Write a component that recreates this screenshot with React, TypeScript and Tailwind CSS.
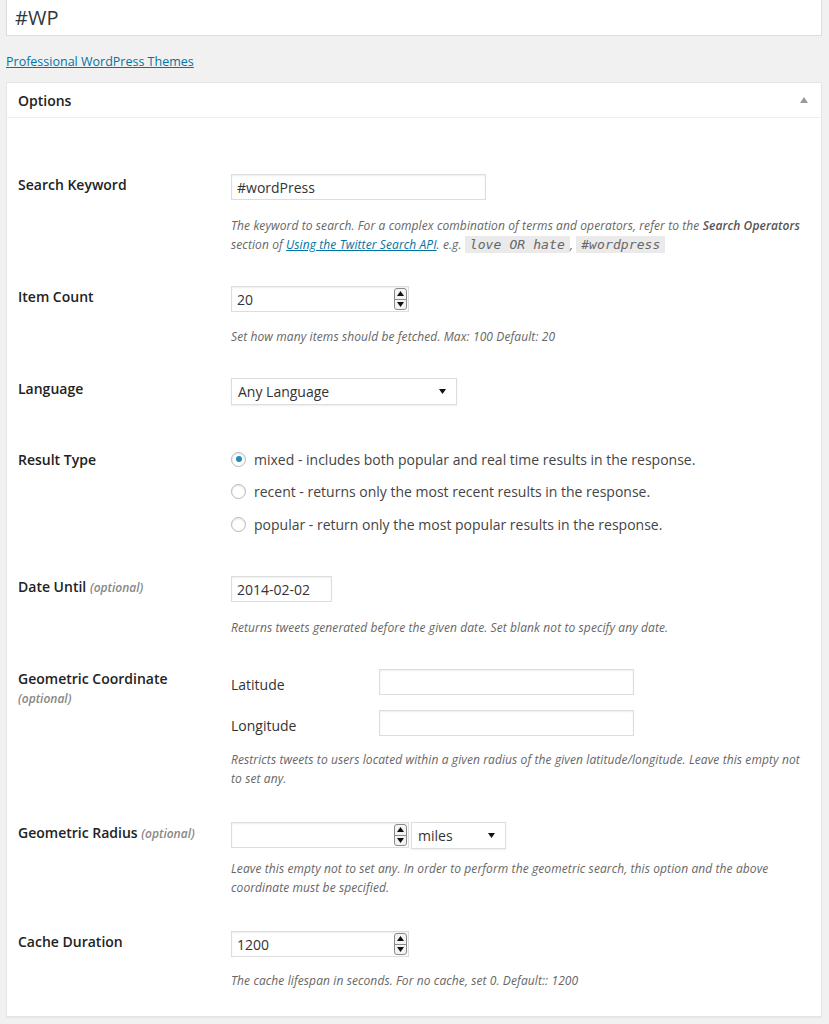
import React from "react";

function Spinner() {
  return (
    <div className="mr-[1px] flex h-[22px] w-[13px] shrink-0 flex-col overflow-hidden rounded-[3px] border border-[#8a8a8a] bg-[#f4f4f4]">
      <div className="flex flex-1 items-center justify-center border-b border-[#8a8a8a]">
        <svg width="7" height="5" viewBox="0 0 7 5">
          <path d="M0 5 L3.5 0 L7 5 Z" fill="#111" />
        </svg>
      </div>
      <div className="flex flex-1 items-center justify-center">
        <svg width="7" height="5" viewBox="0 0 7 5">
          <path d="M0 0 L7 0 L3.5 5 Z" fill="#111" />
        </svg>
      </div>
    </div>
  );
}

function Caret() {
  return (
    <svg width="7" height="5" viewBox="0 0 7 5" className="shrink-0">
      <path d="M0 0 L7 0 L3.5 5 Z" fill="#111" />
    </svg>
  );
}

function TextBox({ value = "", width }: { value?: string; width: string }) {
  return (
    <div
      className={`flex h-[26px] ${width} items-center border border-[#ddd] bg-white pl-[5px] text-[14px] text-[#333] shadow-[inset_0_1px_2px_rgba(0,0,0,0.07)]`}
    >
      {value}
    </div>
  );
}

function NumberBox({ value = "" }: { value?: string }) {
  return (
    <div className="flex h-[26px] w-[178px] items-center border border-[#ddd] bg-white pl-[5px] text-[14px] text-[#333] shadow-[inset_0_1px_2px_rgba(0,0,0,0.07)]">
      <span className="flex-1">{value}</span>
      <Spinner />
    </div>
  );
}

function SelectBox({ value, width }: { value: string; width: string }) {
  return (
    <div
      className={`flex h-[27px] ${width} items-center justify-between border border-[#ddd] bg-white pl-[6px] pr-[10px] text-[14px] text-[#333] shadow-[0_1px_2px_rgba(0,0,0,0.07)]`}
    >
      <span>{value}</span>
      <Caret />
    </div>
  );
}

function Desc({ children, className = "" }: { children: React.ReactNode; className?: string }) {
  return <p className={`text-[12px] italic leading-[19px] tracking-[0.1px] text-[#666] ${className}`}>{children}</p>;
}

function Optional() {
  return <span className="text-[12px] italic font-semibold text-[#888]">(optional)</span>;
}

function Radio({ checked, label }: { checked?: boolean; label: string }) {
  return (
    <label className="flex h-[20px] items-center gap-[8px] text-[14px] text-[#444]">
      <span className="flex size-[15px] items-center justify-center rounded-full border border-[#b4b9be] bg-white shadow-[inset_0_1px_2px_rgba(0,0,0,0.1)]">
        {checked && <span className="size-[6px] rounded-full bg-[#1e8cbe]" />}
      </span>
      {label}
    </label>
  );
}

function Row({ label, className = "", children }: { label: React.ReactNode; className?: string; children: React.ReactNode }) {
  return (
    <div className={`flex ${className}`}>
      <div className="w-[213px] shrink-0 pt-[1px] text-[14px] font-semibold leading-[20px] text-[#222]">{label}</div>
      <div className="min-w-0 flex-1 pr-[12px]">{children}</div>
    </div>
  );
}

export default function App() {
  return (
    <div className="min-h-[1024px] bg-[#f1f1f1] pl-[6px] pr-[7px] font-['Open_Sans',sans-serif]">
      <div className="flex h-[36px] items-center border border-t-0 border-[#ddd] bg-white pl-[8px] text-[20px] text-[#32373c]">
        #WP
      </div>

      <a href="#" className="mt-[16px] block w-fit text-[12.5px] leading-[19px] text-[#0074a2] underline">
        Professional WordPress Themes
      </a>

      <div className="mt-[11px] border border-[#e5e5e5] bg-white shadow-[0_1px_1px_rgba(0,0,0,0.04)]">
        <div className="flex h-[35px] items-center justify-between border-b border-[#eee] pl-[11px] pr-[13px]">
          <h3 className="text-[14px] font-semibold text-[#222]">Options</h3>
          <svg width="8" height="6" viewBox="0 0 8 6">
            <path d="M0 6 L4 0 L8 6 Z" fill="#999" />
          </svg>
        </div>

        <div className="pb-[26px] pl-[11px] pt-[56px]">
          <Row label="Search Keyword">
            <TextBox value="#wordPress" width="w-[255px]" />
            <Desc className="mt-[16px]">
              The keyword to search. For a complex combination of terms and operators, refer to the{" "}
              <b className="font-semibold text-[#555]">Search Operators</b>
              <br />
              section of{" "}
              <a href="#" className="text-[#0074a2] underline">
                Using the Twitter Search API
              </a>
              . e.g.{" "}
              <code className="bg-[#eaeaea] px-[5px] py-[1px] font-['DejaVu_Sans_Mono',monospace] text-[13px] text-[#666]">
                love OR hate
              </code>
              ,{" "}
              <code className="bg-[#eaeaea] px-[5px] py-[1px] font-['DejaVu_Sans_Mono',monospace] text-[13px] text-[#666]">
                #wordpress
              </code>
            </Desc>
          </Row>

          <Row label="Item Count" className="mt-[32px]">
            <NumberBox value="20" />
            <Desc className="mt-[15px]">Set how many items should be fetched. Max: 100 Default: 20</Desc>
          </Row>

          <Row label="Language" className="mt-[32px]">
            <SelectBox value="Any Language" width="w-[226px]" />
          </Row>

          <Row label="Result Type" className="mt-[44px]">
            <div className="flex flex-col gap-[12.5px]">
              <Radio checked label="mixed - includes both popular and real time results in the response." />
              <Radio label="recent - returns only the most recent results in the response." />
              <Radio label="popular - return only the most popular results in the response." />
            </div>
          </Row>

          <Row
            label={
              <>
                Date Until <Optional />
              </>
            }
            className="mt-[42px]"
          >
            <TextBox value="2014-02-02" width="w-[101px]" />
            <Desc className="mt-[16px]">
              Returns tweets generated before the given date. Set blank not to specify any date.
            </Desc>
          </Row>

          <Row
            label={
              <>
                Geometric Coordinate
                <div className="leading-[18px]">
                  <Optional />
                </div>
              </>
            }
            className="mt-[31px]"
          >
            <div className="flex items-center">
              <span className="w-[148px] pt-[6px] text-[14px] text-[#333]">Latitude</span>
              <TextBox width="w-[255px]" />
            </div>
            <div className="mt-[15px] flex items-center">
              <span className="w-[148px] pt-[4px] text-[14px] text-[#333]">Longitude</span>
              <TextBox width="w-[255px]" />
            </div>
            <Desc className="mt-[14px]">
              Restricts tweets to users located within a given radius of the given latitude/longitude. Leave this empty not
              <br />
              to set any.
            </Desc>
          </Row>

          <Row
            label={
              <>
                Geometric Radius <Optional />
              </>
            }
            className="mt-[34px]"
          >
            <div className="flex gap-[2px]">
              <NumberBox />
              <SelectBox value="miles" width="w-[95px]" />
            </div>
            <Desc className="mt-[10px]">
              Leave this empty not to set any. In order to perform the geometric search, this option and the above
              <br />
              coordinate must be specified.
            </Desc>
          </Row>

          <Row label="Cache Duration" className="mt-[34px]">
            <NumberBox value="1200" />
            <Desc className="mt-[14px]">The cache lifespan in seconds. For no cache, set 0. Default:: 1200</Desc>
          </Row>
        </div>
      </div>
    </div>
  );
}
